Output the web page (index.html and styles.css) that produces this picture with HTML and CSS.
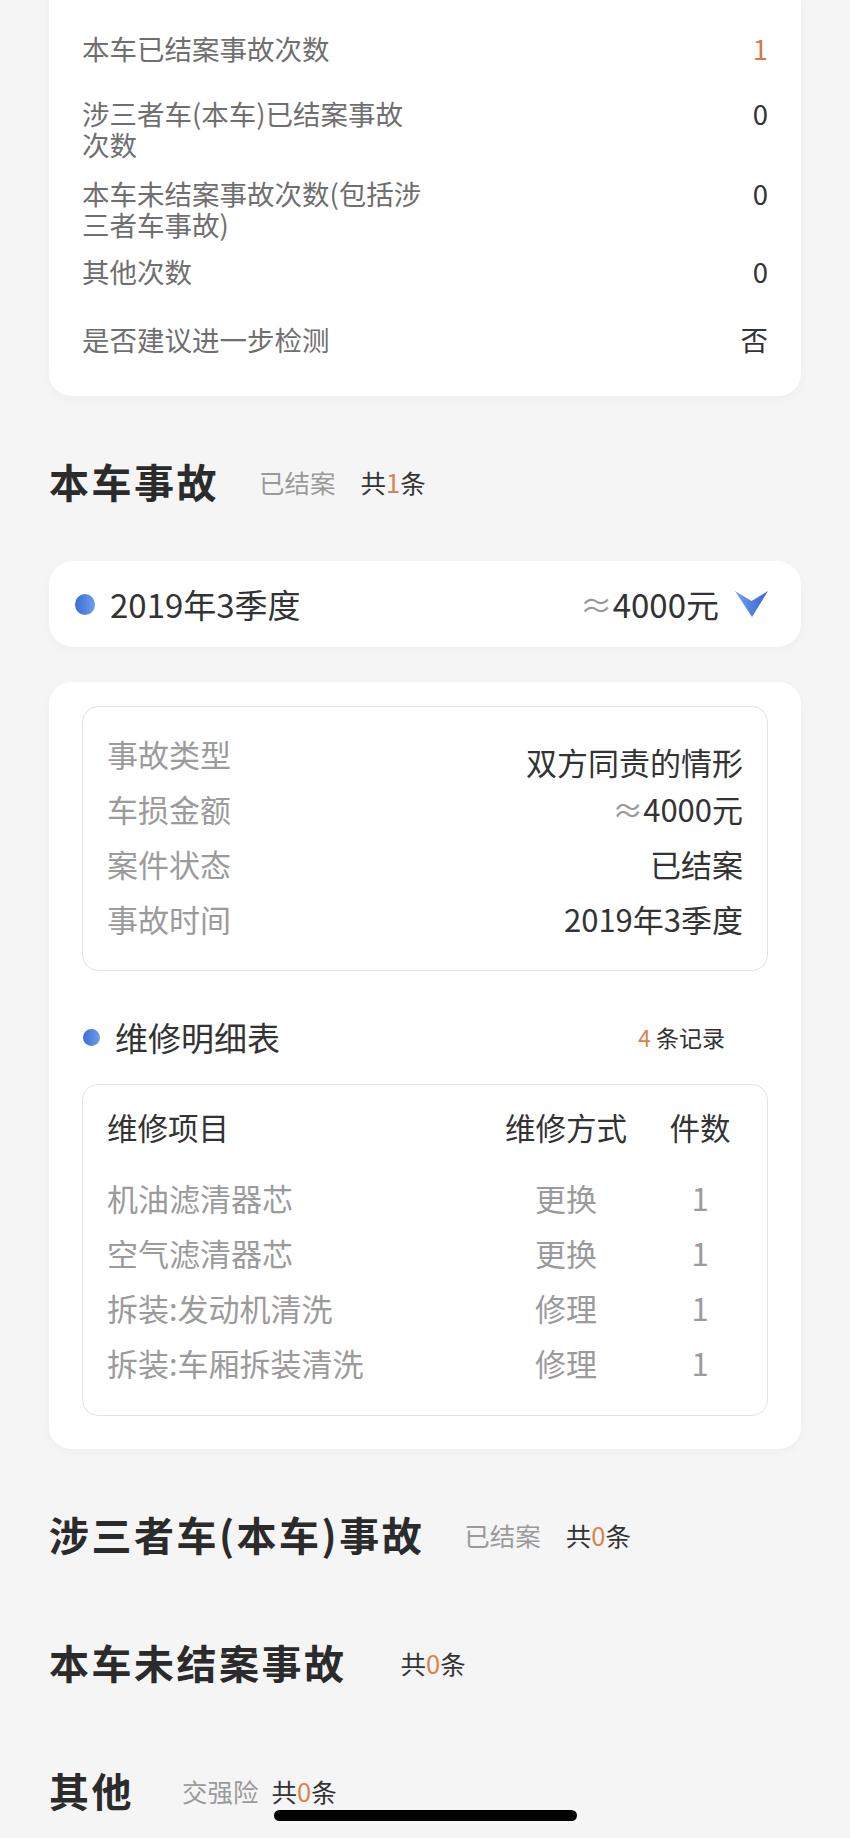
FILE: index.html
```html
<!DOCTYPE html>
<html lang="zh-CN">
<head>
<meta charset="utf-8">
<title>出险记录</title>
<link rel="stylesheet" href="styles.css">
</head>
<body>
<div class="page">
  <section class="card summary">
    <div class="stat-row">
      <span class="stat-label">本车已结案事故次数</span>
      <span class="stat-value stat-value--accent">1</span>
    </div>
    <div class="stat-row stat-row--gap-l">
      <span class="stat-label">涉三者车(本车)已结案事故次数</span>
      <span class="stat-value">0</span>
    </div>
    <div class="stat-row stat-row--gap-m">
      <span class="stat-label">本车未结案事故次数(包括涉三者车事故)</span>
      <span class="stat-value">0</span>
    </div>
    <div class="stat-row stat-row--gap-s">
      <span class="stat-label">其他次数</span>
      <span class="stat-value">0</span>
    </div>
    <div class="stat-row stat-row--gap-xl">
      <span class="stat-label">是否建议进一步检测</span>
      <span class="stat-value">否</span>
    </div>
  </section>

  <section class="section">
    <div class="section-head">
      <h2 class="section-title">本车事故</h2>
      <span class="section-status">已结案</span>
      <span class="section-count">共<em>1</em>条</span>
    </div>

    <div class="card accident-head">
      <span class="dot dot--lg"></span>
      <span class="accident-date">2019年3季度</span>
      <span class="accident-amount"><span class="approx">≈</span>4000元</span>
      <svg class="chevron" viewBox="0 0 33 26" width="33" height="26" aria-hidden="true">
        <defs>
          <linearGradient id="chev" x1="0" y1="0" x2="1" y2="0">
            <stop offset="0" stop-color="#7aa6ee"/>
            <stop offset="0.5" stop-color="#4f80e0"/>
            <stop offset="1" stop-color="#3a68d2"/>
          </linearGradient>
        </defs>
        <polygon points="0,0 16.5,10 33,0 17,26" fill="url(#chev)"/>
      </svg>
    </div>

    <div class="card accident-detail">
      <div class="info-box">
        <div class="info-row info-row--low">
          <span class="info-label">事故类型</span>
          <span class="info-value">双方同责的情形</span>
        </div>
        <div class="info-row">
          <span class="info-label">车损金额</span>
          <span class="info-value"><span class="approx">≈</span>4000元</span>
        </div>
        <div class="info-row">
          <span class="info-label">案件状态</span>
          <span class="info-value">已结案</span>
        </div>
        <div class="info-row">
          <span class="info-label">事故时间</span>
          <span class="info-value">2019年3季度</span>
        </div>
      </div>

      <div class="repair-head">
        <span class="dot dot--sm"></span>
        <span class="repair-title">维修明细表</span>
        <span class="repair-count"><em>4</em> 条记录</span>
      </div>

      <div class="repair-box">
        <div class="repair-row repair-row--head">
          <span>维修项目</span>
          <span class="col-c">维修方式</span>
          <span class="col-c">件数</span>
        </div>
        <div class="repair-row">
          <span>机油滤清器芯</span>
          <span class="col-c">更换</span>
          <span class="col-c">1</span>
        </div>
        <div class="repair-row">
          <span>空气滤清器芯</span>
          <span class="col-c">更换</span>
          <span class="col-c">1</span>
        </div>
        <div class="repair-row">
          <span>拆装:发动机清洗</span>
          <span class="col-c">修理</span>
          <span class="col-c">1</span>
        </div>
        <div class="repair-row">
          <span>拆装:车厢拆装清洗</span>
          <span class="col-c">修理</span>
          <span class="col-c">1</span>
        </div>
      </div>
    </div>
  </section>

  <section class="section section--empty">
    <div class="section-head">
      <h2 class="section-title">涉三者车(本车)事故</h2>
      <span class="section-status">已结案</span>
      <span class="section-count">共<em>0</em>条</span>
    </div>
  </section>

  <section class="section section--empty">
    <div class="section-head">
      <h2 class="section-title">本车未结案事故</h2>
      <span class="section-count section-count--solo">共<em>0</em>条</span>
    </div>
  </section>

  <section class="section section--empty">
    <div class="section-head">
      <h2 class="section-title">其他</h2>
      <span class="section-status section-status--tag">交强险</span>
      <span class="section-count section-count--tight">共<em>0</em>条</span>
    </div>
  </section>
</div>

<div class="watermarks" aria-hidden="true">
  <span class="wm" style="left:230px;top:470px">车信盟</span>
  <span class="wm" style="left:360px;top:1440px">车信盟</span>
  <span class="wm" style="left:235px;top:1665px">车信盟</span>
</div>

<div class="home-indicator"></div>
</body>
</html>
```

FILE: styles.css
```css
* {
  box-sizing: border-box;
}

html, body {
  margin: 0;
  padding: 0;
}

body {
  background: #f5f5f5;
  font-family: "Noto Sans CJK SC", "Noto Sans", sans-serif;
  color: #333;
  position: relative;
  min-height: 1838px;
  overflow: hidden;
}

.page {
  padding: 0 49px;
}

.card {
  background: #fff;
  border-radius: 22px;
  box-shadow: 0 3px 10px rgba(0, 0, 0, 0.03);
}

/* summary card */
.summary {
  margin-top: -24px;
  padding: 57px 33px 41px;
}

.stat-row {
  display: flex;
  justify-content: space-between;
  align-items: flex-start;
  font-size: 27.5px;
  line-height: 31px;
}

.stat-row--gap-l { margin-top: 34px; }
.stat-row--gap-m { margin-top: 18px; }
.stat-row--gap-s { margin-top: 16px; }
.stat-row--gap-xl { margin-top: 37px; }

.stat-label {
  color: #6f6f6f;
  max-width: 344px;
}

.stat-value {
  color: #333;
}

.stat-value--accent {
  color: #d27c48;
}

/* sections */
.section {
  padding-top: 60px;
}

.section--empty {
  padding-bottom: 18px;
}

.section-head {
  display: flex;
  align-items: center;
  height: 50px;
}

.section-title {
  margin: 0;
  font-size: 40px;
  font-weight: 700;
  letter-spacing: 2.5px;
  color: #2b2b2b;
  line-height: 50px;
}

.section-status {
  margin-left: 40px;
  font-size: 25.5px;
  color: #9a9a9a;
}

.section-status--tag {
  margin-left: 48px;
}

.section-count {
  margin-left: 25px;
  font-size: 25.5px;
  color: #333;
}

.section-count--solo {
  margin-left: 54px;
}

.section-count--tight {
  margin-left: 13px;
}

.section-count em,
.repair-count em {
  font-style: normal;
  color: #d6844f;
}

/* accident header */
.accident-head {
  margin-top: 55px;
  height: 86px;
  border-radius: 24px;
  display: flex;
  align-items: center;
  padding: 0 33px 0 26px;
}

.dot {
  flex: none;
  border-radius: 50%;
  background: linear-gradient(90deg, #3a6dd6, #6f9dea);
}

.dot--lg {
  width: 20px;
  height: 21px;
}

.dot--sm {
  width: 17px;
  height: 17px;
}

.accident-date {
  margin-left: 15px;
  font-size: 33px;
  color: #333;
}

.accident-amount {
  margin-left: auto;
  font-size: 33px;
  color: #333;
}

.approx {
  color: #9a9a9a;
}

.chevron {
  margin-left: 16px;
  display: block;
}

/* detail card */
.accident-detail {
  margin-top: 35px;
  padding: 24px 33px 33px;
}

.info-box {
  border: 1px solid #e3e3e3;
  border-radius: 16px;
  padding: 19px 24px 24px;
}

.info-row {
  display: flex;
  justify-content: space-between;
  align-items: center;
  height: 55px;
  font-size: 31px;
}

.info-label {
  color: #9b9b9b;
}

.info-value {
  color: #333;
}

.info-row--low .info-value {
  margin-top: 15px;
}

.repair-head {
  margin-top: 44px;
  height: 44px;
  display: flex;
  align-items: center;
  padding: 0 43px 0 1px;
}

.repair-title {
  margin-left: 15px;
  font-size: 33px;
  color: #333;
}

.repair-count {
  margin-left: auto;
  font-size: 23px;
  color: #333;
}

.repair-box {
  margin-top: 25px;
  border: 1px solid #e3e3e3;
  border-radius: 16px;
  padding: 14px 35px 25px 24px;
}

.repair-row {
  display: grid;
  grid-template-columns: 1fr 124px 64px;
  column-gap: 40px;
  align-items: center;
  height: 55px;
  font-size: 31px;
  color: #9b9b9b;
  white-space: nowrap;
}

.repair-row--head {
  font-size: 30.5px;
  color: #333;
  margin-bottom: 16px;
}

.col-c {
  text-align: center;
}

/* overlays */
.watermarks {
  position: absolute;
  inset: 0;
  pointer-events: none;
  overflow: hidden;
}

.wm {
  position: absolute;
  font-size: 46px;
  font-weight: 700;
  color: rgba(0, 0, 0, 0.022);
  transform: rotate(-32deg);
  white-space: nowrap;
}

.home-indicator {
  position: absolute;
  left: 274px;
  top: 1810px;
  width: 303px;
  height: 11px;
  border-radius: 6px;
  background: #000;
}
```
